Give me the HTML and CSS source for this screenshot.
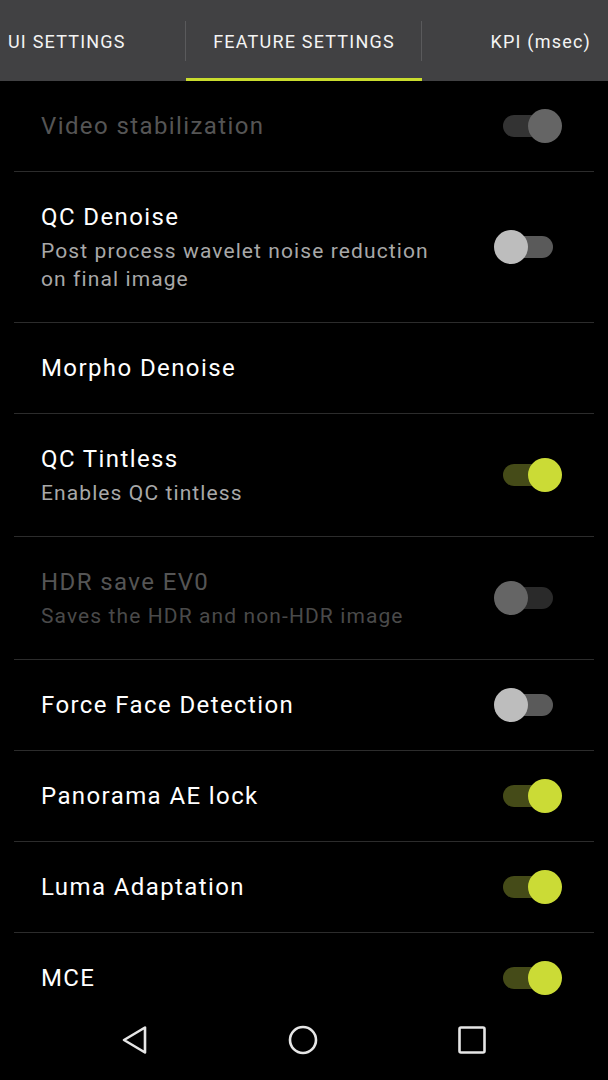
FILE: index.html
```html
<!DOCTYPE html>
<html lang="en">
<head>
    <meta charset="UTF-8">
    <meta name="viewport" content="width=device-width, initial-scale=1.0">
    <title>Camera Settings</title>
    <link rel="stylesheet" href="styles.css">
</head>
<body>

<div class="screen">
    <!-- tabs -->
    <div class="tab-bar">
        <div class="tab tab-ui">UI SETTINGS</div>
        <div class="tab tab-feature active">FEATURE SETTINGS</div>
        <div class="tab tab-kpi">KPI (msec)</div>
    </div>

    <!-- settings list -->
    <div class="pref-list">
        <div class="pref first disabled">
            <div class="pref-text">
                <div class="pref-title">Video stabilization</div>
            </div>
            <div class="switch on"><span class="track"></span><span class="thumb"></span></div>
        </div>

        <div class="pref">
            <div class="pref-text">
                <div class="pref-title">QC Denoise</div>
                <div class="pref-summary">Post process wavelet noise reduction on final image</div>
            </div>
            <div class="switch"><span class="track"></span><span class="thumb"></span></div>
        </div>

        <div class="pref">
            <div class="pref-text">
                <div class="pref-title">Morpho Denoise</div>
            </div>
        </div>

        <div class="pref">
            <div class="pref-text">
                <div class="pref-title">QC Tintless</div>
                <div class="pref-summary">Enables QC tintless</div>
            </div>
            <div class="switch on"><span class="track"></span><span class="thumb"></span></div>
        </div>

        <div class="pref disabled">
            <div class="pref-text">
                <div class="pref-title">HDR save EV0</div>
                <div class="pref-summary">Saves the HDR and non-HDR image</div>
            </div>
            <div class="switch"><span class="track"></span><span class="thumb"></span></div>
        </div>

        <div class="pref">
            <div class="pref-text">
                <div class="pref-title">Force Face Detection</div>
            </div>
            <div class="switch"><span class="track"></span><span class="thumb"></span></div>
        </div>

        <div class="pref">
            <div class="pref-text">
                <div class="pref-title">Panorama AE lock</div>
            </div>
            <div class="switch on"><span class="track"></span><span class="thumb"></span></div>
        </div>

        <div class="pref">
            <div class="pref-text">
                <div class="pref-title">Luma Adaptation</div>
            </div>
            <div class="switch on"><span class="track"></span><span class="thumb"></span></div>
        </div>

        <div class="pref">
            <div class="pref-text">
                <div class="pref-title">MCE</div>
            </div>
            <div class="switch on"><span class="track"></span><span class="thumb"></span></div>
        </div>
    </div>

    <!-- navigation bar -->
    <div class="nav-bar">
        <svg class="nav-icon" width="32" height="32" viewBox="0 0 32 32">
            <path d="M27 3.5 L27 28.5 L6 16 Z" fill="none" stroke="#e6e6e6" stroke-width="2.6" stroke-linejoin="round"/>
        </svg>
        <svg class="nav-icon" width="32" height="32" viewBox="0 0 32 32">
            <circle cx="16" cy="16" r="13" fill="none" stroke="#e6e6e6" stroke-width="2.6"/>
        </svg>
        <svg class="nav-icon" width="32" height="32" viewBox="0 0 32 32">
            <rect x="3.5" y="3.5" width="25" height="25" rx="1.5" fill="none" stroke="#e6e6e6" stroke-width="2.6"/>
        </svg>
    </div>
</div>

</body>
</html>
```

FILE: styles.css
```css
body {
    margin: 0;
    padding: 0;
    background-color: #000;
    font-family: Roboto, "Liberation Sans", sans-serif;
}

.screen {
    width: 608px;
    height: 1080px;
    overflow: hidden;
    position: relative;
    background-color: #000;
}

/* tabs */

.tab-bar {
    height: 81px;
    background-color: #414143;
    display: flex;
    align-items: stretch;
}

.tab {
    color: #f4f4f4;
    font-size: 18px;
    letter-spacing: 1.2px;
    white-space: nowrap;
    display: flex;
    align-items: center;
    box-sizing: border-box;
    position: relative;
    padding-top: 1px;
}

.tab-ui {
    width: 186px;
    padding-left: 8px;
}

.tab-feature {
    width: 236px;
    justify-content: center;
}

.tab-kpi {
    flex: 1;
    justify-content: flex-end;
    padding-right: 17px;
}

.tab-ui::after,
.tab-feature::after {
    content: "";
    position: absolute;
    right: 0;
    top: 21px;
    height: 40px;
    width: 1px;
    background-color: #5a5a5c;
}

.tab.active {
    border-bottom: 3px solid #c9dc2e;
    padding-top: 4px;
}

/* list */

.pref-list {
    padding: 0 14px;
}

.pref {
    display: flex;
    align-items: center;
    padding: 29px 32px 29px 27px;
    border-bottom: 1px solid #2c2c2c;
}

.pref.first {
    padding-top: 29px;
}

.pref-text {
    flex: 1;
}

.pref-title {
    color: #fff;
    font-size: 24px;
    letter-spacing: 1.4px;
    line-height: 32px;
}

.pref-summary {
    color: #a8a8a8;
    font-size: 21px;
    letter-spacing: 1.1px;
    line-height: 28px;
    margin-top: 4px;
    max-width: 410px;
}

.pref.disabled .pref-title {
    color: #555;
}

.pref.disabled .pref-summary {
    color: #4a4a4a;
}

/* switches */

.switch {
    position: relative;
    width: 68px;
    height: 34px;
    flex-shrink: 0;
    margin: -1px 0 -1px 20px;
}

.switch .track {
    position: absolute;
    left: 9px;
    top: 6px;
    width: 50px;
    height: 22px;
    border-radius: 11px;
    background-color: #5a5a5a;
}

.switch .thumb {
    position: absolute;
    left: 0;
    top: 0;
    width: 34px;
    height: 34px;
    border-radius: 50%;
    background-color: #bdbdbd;
}

.switch.on .track {
    background-color: #454b18;
}

.switch.on .thumb {
    left: 34px;
    background-color: #cbdb36;
}

.pref.disabled .switch .track {
    background-color: #2a2a2a;
}

.pref.disabled .switch .thumb {
    background-color: #656565;
}

.pref.disabled .switch.on .track {
    background-color: #333;
}

/* navigation bar */

.nav-bar {
    position: absolute;
    left: 0;
    right: 0;
    bottom: 0;
    height: 80px;
    background-color: #000;
    display: flex;
    align-items: center;
    justify-content: space-between;
    padding: 0 120px 0 118px;
}
```
